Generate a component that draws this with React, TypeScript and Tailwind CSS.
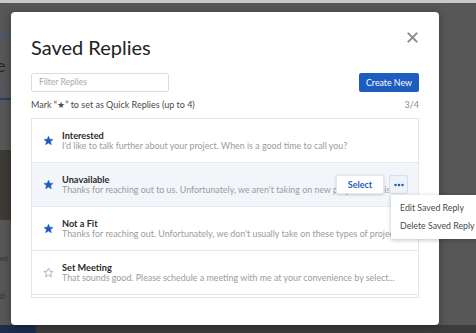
import { MoreHorizontal } from 'lucide-react'

const font = { fontFamily: 'Lato, "Open Sans", sans-serif' }

type Reply = { title: string; body: string; starred: boolean }

const replies: Reply[] = [
  { title: 'Interested', body: "I'd like to talk further about your project. When is a good time to call you?", starred: true },
  { title: 'Unavailable', body: "Thanks for reaching out to us. Unfortunately, we aren't taking on new projects at this time.", starred: true },
  { title: 'Not a Fit', body: "Thanks for reaching out. Unfortunately, we don't usually take on these types of projec...", starred: true },
  { title: 'Set Meeting', body: 'That sounds good. Please schedule a meeting with me at your convenience by select...', starred: false },
]

function Star({ filled }: { filled: boolean }) {
  return (
    <svg width="11" height="11" viewBox="0 0 24 24" className="shrink-0">
      <path
        d="M12 2.5l2.9 6.6 7.1.6-5.4 4.7 1.6 7-6.2-3.7-6.2 3.7 1.6-7L2 9.7l7.1-.6z"
        fill={filled ? '#1d5bbd' : 'none'}
        stroke={filled ? '#1d5bbd' : '#9a9a9a'}
        strokeWidth={filled ? 1 : 1.6}
        strokeLinejoin="round"
      />
    </svg>
  )
}

function Row({ reply, active }: { reply: Reply; active?: boolean }) {
  return (
    <div
      className={`relative flex items-center h-[44px] pl-[11px] pr-[10px] border-b border-[#e8e8e8] ${active ? 'bg-[#f2f6fb]' : 'bg-white'}`}
    >
      <Star filled={reply.starred} />
      <div className="ml-[8px] min-w-0 flex-1 leading-[10px]">
        <div className="text-[9.2px] font-bold text-[#2b2b2b] pt-[1px]">{reply.title}</div>
        <div className="text-[8.9px] text-[#9b9b9b] whitespace-nowrap overflow-hidden">{reply.body}</div>
      </div>
      {active && (
        <div className="absolute right-[10px] top-[12px] flex items-center gap-[5px]">
          <div className="w-[48px] h-[19px] flex items-center justify-center bg-white rounded-[2px] shadow-[0_1px_3px_rgba(0,0,0,0.18)] border border-[#e4e8ee] text-[9px] font-bold text-[#1d5bbd]">
            Select
          </div>
          <div className="w-[19px] h-[19px] flex items-center justify-center bg-[#eef3fa] rounded-[2px] border border-[#d6dfeb]">
            <MoreHorizontal size={12} strokeWidth={3} color="#1d4f9e" />
          </div>
        </div>
      )}
    </div>
  )
}

export default function App() {
  return (
    <div style={font} className="relative w-[476px] h-[333px] overflow-hidden bg-[#575757]">
      {/* page behind the overlay */}
      <div className="absolute inset-x-0 top-0 h-[3px] bg-[#c9c9c9]" />
      <div className="absolute left-0 top-[28px] text-[7px] text-[#3f5f8a]">ho</div>
      <div className="absolute left-[-4px] top-[52px] text-[18px] text-[#2a2a2a]">e</div>
      <div className="absolute left-0 top-[80px] text-[7px] text-[#3f5f8a]">le</div>
      <div className="absolute left-0 top-[98px] w-[11px] h-[2px] bg-[#2a3f60]" />
      <div className="absolute left-0 top-[150px] w-[11px] h-[70px] bg-[#3e3a36]" />
      <div className="absolute left-0 top-[253px] text-[7px] text-[#333]">ed</div>
      <div className="absolute left-0 top-[290px] text-[7px] text-[#333]">gi</div>
      <div className="absolute left-0 bottom-0 w-full h-[8px] bg-[#3c3c3c] flex">
        <div className="w-[36px] h-full bg-[#1c2e4d]" />
      </div>

      {/* modal */}
      <div className="absolute left-[11px] top-[12px] w-[428px] h-[313px] bg-white rounded-[4px] shadow-[0_2px_8px_rgba(0,0,0,0.35)] px-[20px] pt-[23px]">
        <div className="flex items-start justify-between">
          <h1 className="text-[20px] leading-[24px] text-[#222]">Saved Replies</h1>
          <svg width="11" height="11" viewBox="0 0 12 12" className="mt-[-3px] mr-[1px]">
            <path d="M1.5 1.5l9 9M10.5 1.5l-9 9" stroke="#8c8c8c" strokeWidth="2.2" strokeLinecap="round" />
          </svg>
        </div>

        <div className="flex items-center justify-between mt-[14px]">
          <div className="w-[138px] h-[19px] border border-[#dcdcdc] rounded-[2px] flex items-center px-[7px] text-[8.5px] text-[#a9a9a9]">
            Filter Replies
          </div>
          <div className="w-[60px] h-[19px] rounded-[2px] bg-[#1c5dbf] flex items-center justify-center text-[8.8px] text-white">
            Create New
          </div>
        </div>

        <div className="flex items-center justify-between mt-[7px] text-[9px] text-[#4a4a4a] leading-[12px]">
          <span>Mark “★” to set as Quick Replies (up to 4)</span>
          <span className="text-[#8a8a8a]">3/4</span>
        </div>

        <div className="mt-[7px] border border-[#e6e6e6] h-[180px] overflow-hidden">
          {replies.map((r, i) => (
            <Row key={r.title} reply={r} active={i === 1} />
          ))}
          <div className="h-[4px]" />
        </div>
      </div>

      {/* dropdown */}
      <div className="absolute left-[391px] top-[195px] w-[90px] bg-white rounded-[2px] shadow-[0_1px_4px_rgba(0,0,0,0.25)] py-[4px] text-[8.8px] text-[#4a4a4a]">
        <div className="h-[18px] flex items-center pl-[9px]">Edit Saved Reply</div>
        <div className="h-[18px] flex items-center pl-[9px]">Delete Saved Reply</div>
      </div>
    </div>
  )
}
